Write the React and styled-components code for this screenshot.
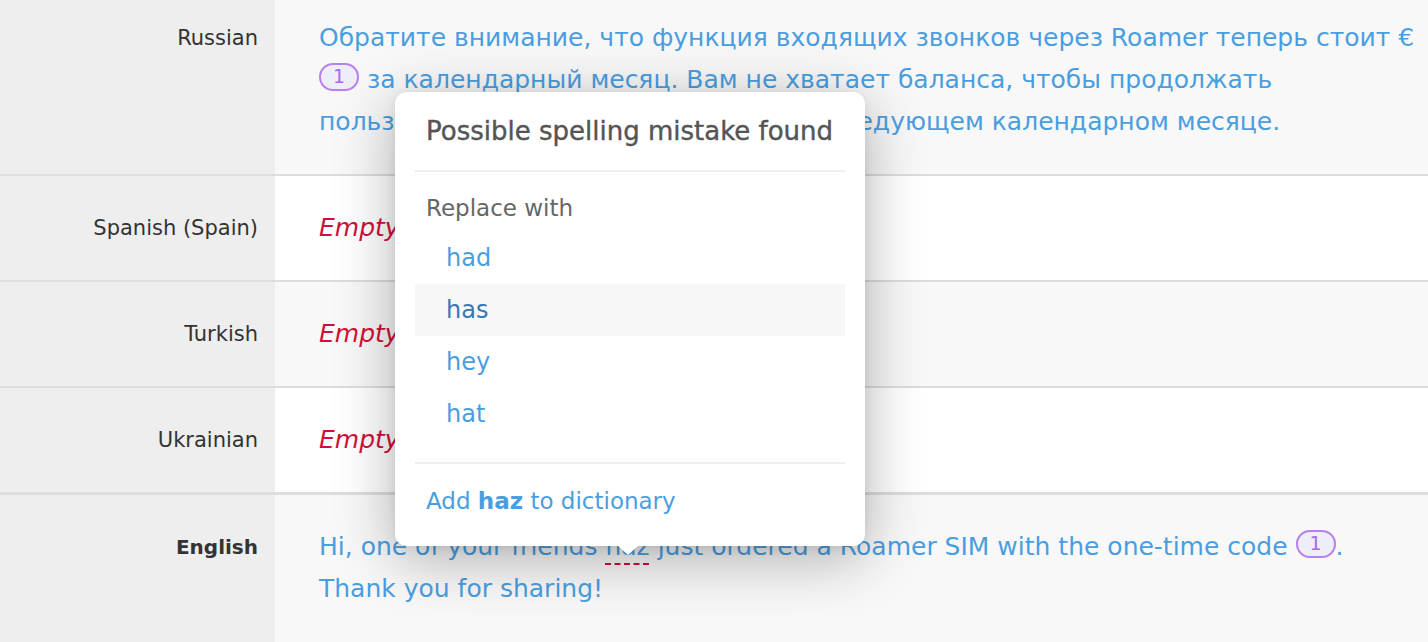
import React from "react";
import styled, { createGlobalStyle } from "styled-components";

const GlobalStyle = createGlobalStyle`
  html, body {
    margin: 0;
    padding: 0;
    background: #ffffff;
    font-family: "DejaVu Sans", "Liberation Sans", Arial, sans-serif;
    overflow: hidden;
  }
`;

const Page = styled.div`
  position: relative;
  width: 1428px;
  height: 642px;
  overflow: hidden;
`;

const Row = styled.div`
  display: grid;
  grid-template-columns: 275px 1fr;
  border-bottom: ${(p) => (p.$last ? "none" : "2px solid #dddddd")};
  border-top: ${(p) => (p.$source ? "2px solid #dddddd" : "none")};
  margin-top: ${(p) => (p.$source ? "-1px" : "0")};
  min-height: ${(p) => (p.$last ? "150px" : "0")};
`;

const Label = styled.div`
  background: #eeeeee;
  text-align: right;
  padding: ${(p) => p.$top ?? 31}px 17px 31px 0;
  font-size: ${(p) => (p.$bold ? "20px" : "21px")};
  line-height: 42px;
  color: #333333;
  font-weight: ${(p) => (p.$bold ? 700 : 400)};
`;

const Cell = styled.div`
  background: ${(p) => (p.$alt ? "#f8f8f8" : "#ffffff")};
  padding: ${(p) => p.$top ?? 31}px 8px 31px 44px;
`;

const Text = styled.div`
  font-size: 25px;
  line-height: 42px;
  color: #4a9ee0;
`;

const Empty = styled.div`
  font-size: 25px;
  line-height: 42px;
  font-style: italic;
  color: #d0103a;
`;

const Badge = styled.span`
  display: inline-flex;
  align-items: center;
  justify-content: center;
  box-sizing: border-box;
  width: 40px;
  height: 28px;
  border: 2px solid #b97ff0;
  border-radius: 14px;
  background: #eeeef9;
  color: #a86ae8;
  font-size: 19px;
  line-height: 1;
  vertical-align: 5px;
`;

const Misspelled = styled.span`
  text-decoration: underline dashed #d0103a;
  text-decoration-thickness: 2px;
  text-underline-offset: 8px;
`;

const Popover = styled.div`
  position: absolute;
  left: 395px;
  top: 92px;
  width: 470px;
  box-sizing: border-box;
  padding: 0 20px;
  background: #ffffff;
  border-radius: 12px;
  box-shadow: 0 12px 60px rgba(0, 0, 0, 0.3), 0 2px 10px rgba(0, 0, 0, 0.08);

  &::after {
    content: "";
    position: absolute;
    left: 222px;
    bottom: -9px;
    border-left: 11px solid transparent;
    border-right: 11px solid transparent;
    border-top: 10px solid #ffffff;
  }
`;

const PopHeader = styled.div`
  height: 78px;
  display: flex;
  align-items: center;
  padding-left: 11px;
  border-bottom: 2px solid #eeeeee;
  font-size: 26px;
  color: #555555;
  -webkit-text-stroke: 0.4px #555555;
`;

const Section = styled.div`
  padding: 16px 0 22px;
  border-bottom: 2px solid #eeeeee;
`;

const SectionTitle = styled.div`
  padding-left: 11px;
  margin-bottom: 4px;
  font-size: 23px;
  line-height: 40px;
  color: #666666;
`;

const Suggestion = styled.div`
  height: 52px;
  display: flex;
  align-items: center;
  padding-left: 31px;
  font-size: 24px;
  color: ${(p) => (p.$active ? "#3a78b5" : "#4a9ee0")};
  background: ${(p) => (p.$active ? "#f7f7f7" : "transparent")};
`;

const Footer = styled.div`
  padding: 16px 0 24px 11px;
  font-size: 23px;
  line-height: 42px;
  color: #4a9ee0;
`;

const rows = [
  {
    lang: "Russian",
    top: 17,
    content: (
      <>
        Обратите внимание, что функция входящих звонков через Roamer теперь
        стоит € <Badge>1</Badge> за календарный месяц. Вам не хватает баланса,
        чтобы продолжать пользоваться этой функцией также в следующем
        календарном месяце.
      </>
    ),
  },
  { lang: "Spanish (Spain)", empty: true },
  { lang: "Turkish", empty: true },
  { lang: "Ukrainian", empty: true },
  {
    lang: "English",
    source: true,
    content: (
      <>
        Hi, one of your friends <Misspelled>haz</Misspelled> just ordered a
        Roamer SIM with the one-time code <Badge>1</Badge>.
        <br />
        Thank you for sharing!
      </>
    ),
  },
];

const suggestions = ["had", "has", "hey", "hat"];

export default function App() {
  return (
    <Page>
      <GlobalStyle />
      {rows.map((row, i) => (
        <Row
          key={row.lang}
          $source={row.source}
          $last={i === rows.length - 1}
        >
          <Label $bold={row.source} $top={row.top}>
            {row.lang}
          </Label>
          <Cell $alt={i % 2 === 0} $top={row.top}>
            {row.empty ? <Empty>Empty</Empty> : <Text>{row.content}</Text>}
          </Cell>
        </Row>
      ))}
      <Popover>
        <PopHeader>Possible spelling mistake found</PopHeader>
        <Section>
          <SectionTitle>Replace with</SectionTitle>
          {suggestions.map((s) => (
            <Suggestion key={s} $active={s === "has"}>
              {s}
            </Suggestion>
          ))}
        </Section>
        <Footer>
          Add <b>haz</b> to dictionary
        </Footer>
      </Popover>
    </Page>
  );
}
